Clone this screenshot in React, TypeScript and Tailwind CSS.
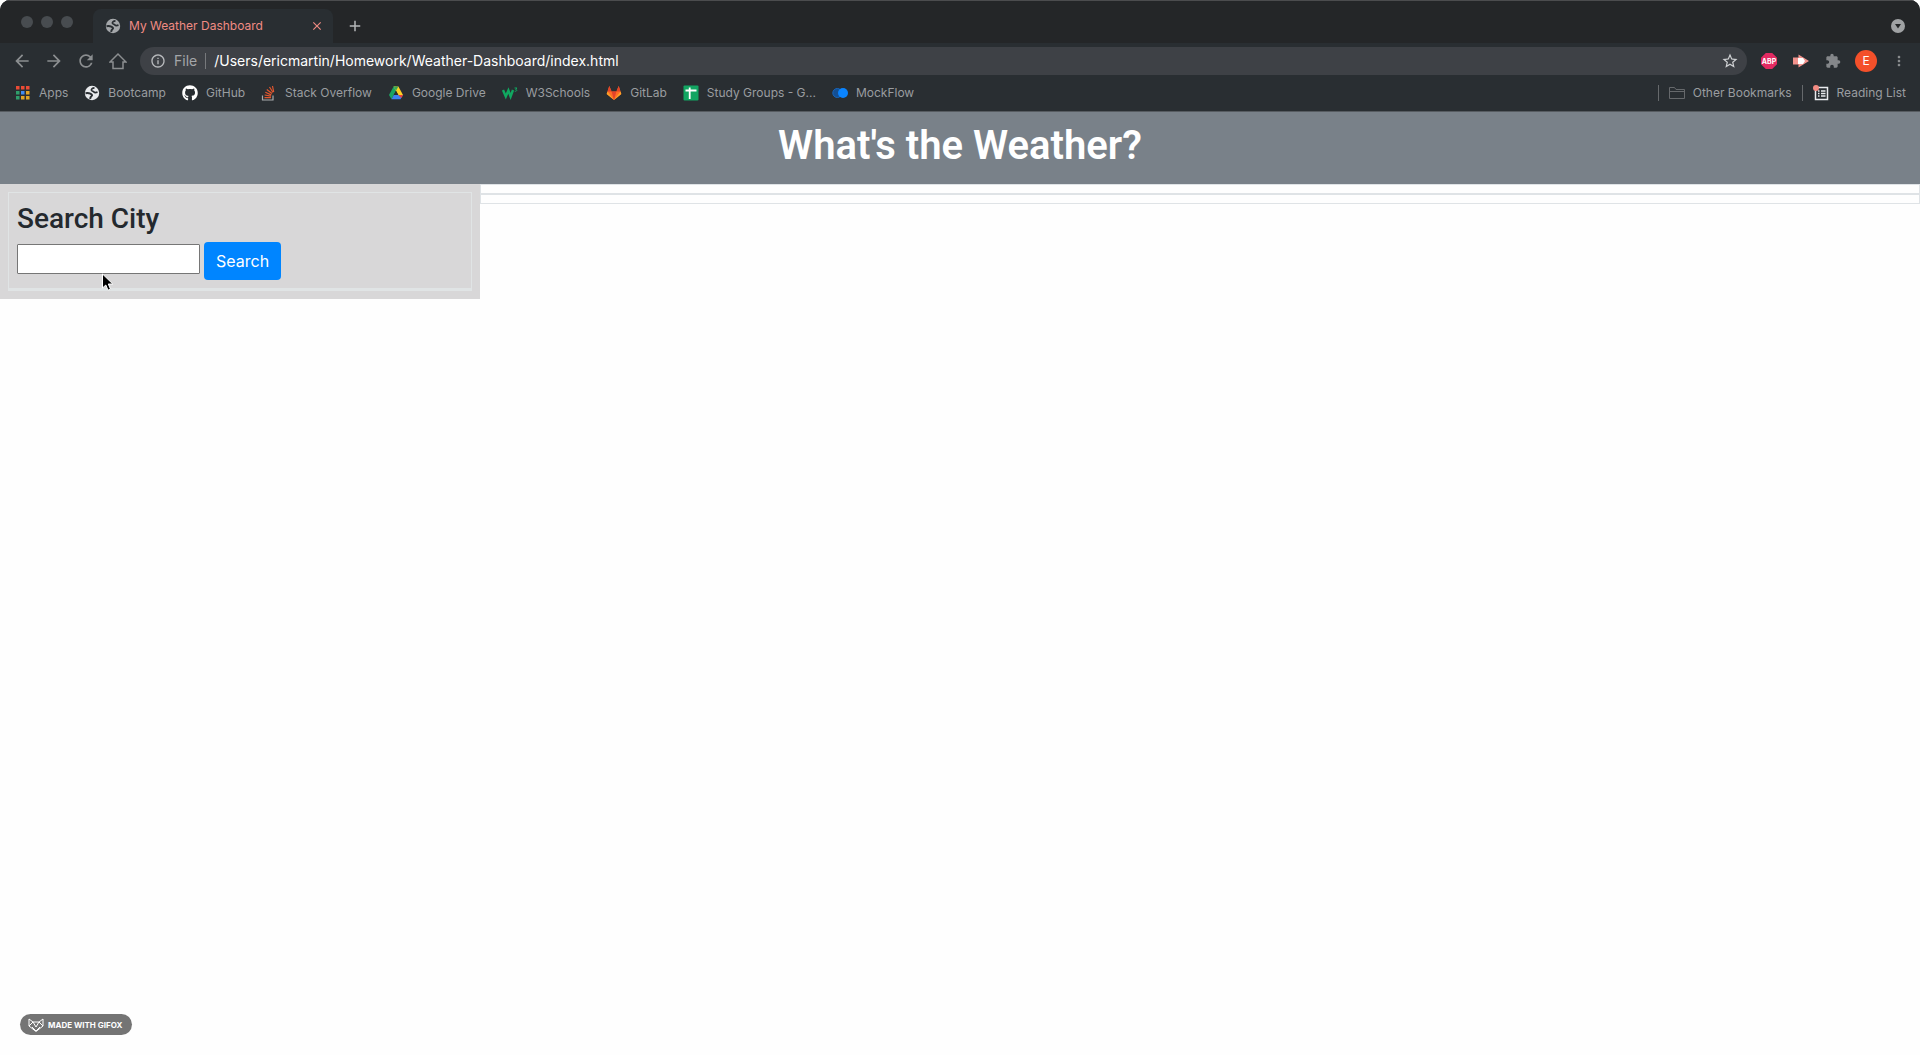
import React from "react";
import { FaGithub } from "react-icons/fa";
import {
  MdArrowBack, MdArrowForward, MdRefresh, MdInfoOutline, MdStarBorder, MdExtension, MdMoreVert, MdClose, MdAdd,
} from "react-icons/md";

function Globe() {
  return (
    <svg viewBox="0 0 16 16" className="size-4 shrink-0" aria-hidden="true">
      <circle cx="8" cy="8" r="7.200" fill="currentColor" />
      <path d="M10.500 2.800C8.500 3 7.200 4 7.500 5.300c.3 1 1.900.8 2.500 1.700.5.8 1.700.8 3.500.2" fill="none" stroke="#292e32" strokeWidth="1.800" />
      <path d="M1.500 8.200c1.800-.3 3.500-.2 4.800.4 1.500.7 2.300 1.500 1.300 2.400-1 .7-1.600 1.200-1.300 3" fill="none" stroke="#292e32" strokeWidth="2" />
    </svg>
  );
}

function AppsIcon() {
  const dots = ["#ea4b35", "#ea4b35", "#ea4b35", "#2f9e6b", "#3f8cf0", "#e0a526", "#2f9e6b", "#e0a526", "#e0a526"];
  return (
    <svg viewBox="0 0 16 16" className="size-4 shrink-0" aria-hidden="true">
      {dots.map((c, i) => (
        <rect key={i} x={1 + (i % 3) * 5} y={1 + Math.floor(i / 3) * 5} width="3.500" height="3.500" fill={c} />
      ))}
    </svg>
  );
}

function StackOverflow() {
  return (
    <svg viewBox="0 0 16 16" className="size-4 shrink-0" aria-hidden="true" fill="none">
      <path d="M1.500 10.500v4.500h10.500v-4.500" stroke="#a9abad" strokeWidth="1.200" />
      <path d="M3.500 12.700h6.500M3.600 10l6.500 1.200M4.300 7.200l6 2.700M5.800 4.500l5.200 4M8.500 2l3.500 5.500M11.500 1l1.200 6" stroke="#e4572e" strokeWidth="1.200" />
    </svg>
  );
}

function Drive() {
  return (
    <svg viewBox="0 0 16 16" className="size-4 shrink-0" aria-hidden="true">
      <path d="M5.600 1.500H8V5.700L3.500 14.200 1 10z" fill="#1ba462" />
      <path d="M5.600 1.500h4.800L15 10h-4.700z" fill="#ffd024" />
      <path d="M3.500 14.200 5.800 10H15l-2.500 4.200z" fill="#3f82f0" />
      <path d="M10.300 10H15l-1.600 3z" fill="#e94235" />
      <path d="M5.600 1.500h4.800L8 5.700z" fill="#3aa757" />
      <path d="M8 5.700 10.300 10H5.700z" fill="#292e32" />
    </svg>
  );
}

function W3() {
  return (
    <svg viewBox="0 0 16 16" className="size-4 shrink-0" aria-hidden="true" fill="none" stroke="#10a860">
      <path d="M1 5l2.800 6.500L6.400 5.500l2.200 6L11 5" strokeWidth="2.400" />
      <path d="M12.500 3h2.500l-1.400 1.400c1.700 0 1.700 2-.8 1.900" strokeWidth="1" />
    </svg>
  );
}

function GitLab() {
  return (
    <svg viewBox="0 0 16 16" className="size-4 shrink-0" aria-hidden="true">
      <path d="M3.300 1 5.600 6.500h4.800L12.700 1 15.300 9 8 15 .7 9z" fill="#fc6d26" />
      <path d="M5.600 6.500h4.800L8 15z" fill="#e24329" />
      <path d="M3.300 1 5.600 6.500H1.500zM12.700 1l1.800 5.500h-4.100z" fill="#e24329" />
      <path d="M1.500 6.500.7 9 8 15zM14.500 6.500l.8 2.500L8 15z" fill="#fca326" />
    </svg>
  );
}

function Sheets() {
  return (
    <svg viewBox="0 0 16 16" className="size-4 shrink-0" aria-hidden="true">
      <rect x=".5" y=".5" width="15" height="15" rx="1" fill="#12a562" />
      <path d="M2.500 5.500h11M6.700 2.500v11.500" stroke="#fff" strokeWidth="1.800" />
    </svg>
  );
}

function MockFlow() {
  return (
    <svg viewBox="0 0 16 16" className="size-4 shrink-0" aria-hidden="true">
      <circle cx="5.300" cy="8" r="4.500" fill="#144f93" stroke="#1767bd" />
      <circle cx="11" cy="8" r="5" fill="#0a84ff" />
    </svg>
  );
}

const bookmarks = [
  { label: "Apps", icon: <AppsIcon /> },
  { label: "Bootcamp", icon: <span className="text-[#e8eaed]"><Globe /></span> },
  { label: "GitHub", icon: <FaGithub className="size-4 shrink-0 text-white" /> },
  { label: "Stack Overflow", icon: <StackOverflow /> },
  { label: "Google Drive", icon: <Drive /> },
  { label: "W3Schools", icon: <W3 /> },
  { label: "GitLab", icon: <GitLab /> },
  { label: "Study Groups - G...", icon: <Sheets /> },
  { label: "MockFlow", icon: <MockFlow /> },
];

function TabStrip() {
  return (
    <div className="flex h-[43px] items-end border-t border-[#4b4c4e] bg-[#242628]">
      <div className="flex gap-2 self-center pl-[21px] pr-5">
        <span className="size-3 rounded-full bg-[#484c50]" />
        <span className="size-3 rounded-full bg-[#484c50]" />
        <span className="size-3 rounded-full bg-[#484c50]" />
      </div>
      <div className="flex h-[34px] w-[240px] items-center rounded-t-lg bg-[#292e32] pl-3 pr-2">
        <span className="text-[#a4a7aa]"><Globe /></span>
        <span className="flex-1 pl-2 text-xs text-[#f08b83]">My Weather Dashboard</span>
        <button aria-label="Close tab" className="grid size-4 place-items-center text-[#f08b83]"><MdClose className="size-3.5" /></button>
      </div>
      <button aria-label="New tab" className="ml-3 grid h-[34px] w-5 place-items-center text-[#b4b6b8]"><MdAdd className="size-[18px]" /></button>
      <button aria-label="Search tabs" className="mb-2.5 ml-auto mr-[15px] grid size-3.5 place-items-center rounded-full bg-[#a0a2a4]">
        <svg viewBox="0 0 8 8" className="size-2" aria-hidden="true"><path d="M1 2h6L4 6.500z" fill="#242628" /></svg>
      </button>
    </div>
  );
}

function Toolbar() {
  return (
    <div className="flex h-9 items-center">
      <div className="flex gap-3 pl-3 text-[#8b8e90]">
        <button aria-label="Back" className="grid size-5 place-items-center"><MdArrowBack className="size-5" /></button>
        <button aria-label="Forward" className="grid size-5 place-items-center"><MdArrowForward className="size-5" /></button>
        <button aria-label="Reload" className="grid size-5 place-items-center"><MdRefresh className="size-5" /></button>
        <button aria-label="Home" className="grid size-5 place-items-center">
          <svg viewBox="0 0 18 18" className="size-[18px]" fill="none" stroke="currentColor" strokeWidth="1.500" aria-hidden="true">
            <path d="M1 10 9 2l8 8H14v6.500H4V10z" />
          </svg>
        </button>
      </div>
      <div className="ml-3 flex h-7 flex-1 items-center rounded-full bg-[#3e4146] pl-2.5 pr-2">
        <MdInfoOutline className="size-4 text-[#b8babd]" />
        <span className="ml-2 border-r border-[#77797c] pr-2 text-sm leading-4 text-[#a4a6a9]">File</span>
        <input aria-label="Address" defaultValue="/Users/ericmartin/Homework/Weather-Dashboard/index.html" className="ml-2 flex-1 bg-transparent text-sm text-white outline-none" />
        <button aria-label="Bookmark this page"><MdStarBorder className="size-[18px] text-[#d0d2d4]" /></button>
      </div>
      <div className="flex items-center gap-4 pl-3.5 pr-[13px]">
        <button aria-label="Adblock Plus" className="grid size-4 place-items-center">
          <svg viewBox="0 0 16 16" className="size-4" aria-hidden="true">
            <path d="M4.800 0h6.400L16 4.800v6.400L11.200 16H4.800L0 11.200V4.800z" fill="#e32a62" />
            <text x="8" y="10.500" fontSize="7" fontWeight="700" textAnchor="middle" fill="#fff">ABP</text>
          </svg>
        </button>
        <button aria-label="Screen recorder">
          <svg viewBox="0 0 16 16" className="size-4" aria-hidden="true">
            <path d="M0 4.500h5.500V1.500l10.500 6.500-10.500 6.500v-3H0z" fill="#f2928c" />
            <path d="M5 5h5l2 3-2 3H5z" fill="#fff" />
          </svg>
        </button>
        <button aria-label="Extensions"><MdExtension className="size-4 text-[#84878a]" /></button>
        <div className="flex items-center gap-3.5 -ml-0.5">
          <button aria-label="Profile" className="grid size-[22px] place-items-center rounded-full bg-[#f4502a] text-xs text-white">E</button>
          <button aria-label="Menu"><MdMoreVert className="size-4 text-[#8b8e90]" /></button>
        </div>
      </div>
    </div>
  );
}

function BookmarksBar() {
  return (
    <nav className="flex h-8 items-center pb-1 pl-[15px] pr-3.5 text-xs text-[#9a9da0]">
      <div className="flex gap-4">
        {bookmarks.map((b) => (
          <a key={b.label} href="#" className="flex items-center gap-2 whitespace-nowrap">{b.icon}{b.label}</a>
        ))}
      </div>
      <div className="ml-auto flex items-center gap-2.5 whitespace-nowrap">
        <span className="h-4 w-px bg-[#66696c]" />
        <a href="#" className="flex items-center gap-2">
          <svg viewBox="0 0 16 16" className="size-4" fill="none" stroke="#66696c" aria-hidden="true"><path d="M.5 13.500v-11h5l1.500 2h8.500v9zM.5 6.500h15" /></svg>
          Other Bookmarks
        </a>
        <span className="h-4 w-px bg-[#66696c]" />
        <a href="#" className="flex items-center gap-2">
          <svg viewBox="0 0 16 16" className="size-4" aria-hidden="true">
            <path d="M2.500 2.500h12v12h-12z" fill="none" stroke="#e8eaed" strokeWidth="1.500" />
            <path d="M5 6h1.500M5 8.500h1.500M5 11h1.500M8 6h4.500M8 8.500h4.500M8 11h4.500" stroke="#e8eaed" strokeWidth="1.300" />
            <circle cx="3" cy="3" r="3" fill="#f28b82" />
          </svg>
          Reading List
        </a>
      </div>
    </nav>
  );
}

export default function App() {
  return (
    <div className="flex min-h-screen flex-col bg-[#fefefe] font-[Inter,sans-serif]">
      <div className="overflow-hidden rounded-t-[10px] border-b border-[#575c61] bg-[#292e32]">
        <TabStrip />
        <Toolbar />
        <BookmarksBar />
      </div>
      <header className="bg-[#798189] pb-3.5 pt-2.5 text-center">
        <h1 className="font-[Roboto,sans-serif] text-[40px] font-semibold leading-[48px] text-white">What&apos;s the Weather?</h1>
      </header>
      <main className="flex flex-1 items-start">
        <aside className="w-1/4 bg-[#d8d7d8] p-2">
          <form className="border border-b-[3px] border-[#e0e4e5] p-2" onSubmit={(e) => e.preventDefault()}>
            <label htmlFor="city" className="mb-[5px] block font-[Roboto,sans-serif] text-[28px] font-medium leading-9 text-[#24292e]">Search City</label>
            <div className="flex items-start gap-1">
              <input id="city" type="text" className="mt-0.5 h-[30px] w-[183px] rounded-[1px] border border-[#767676] bg-white px-0.5" />
              <button className="h-[38px] rounded bg-[#0085ff] px-3 text-base text-white">Search</button>
            </div>
          </form>
        </aside>
        <section className="flex-1">
          <div className="h-2.5 border border-[#dfe3e6] bg-[#fefefe]" />
          <div className="h-2.5 border border-[#dfe3e6] bg-[#fefefe]" />
        </section>
      </main>
      <svg viewBox="0 0 14 20" className="pointer-events-none absolute left-[101px] top-[273px] h-5 w-3.5" aria-hidden="true">
        <path d="M1.500 1v14l3.300-3 2.200 5.200 2.500-1-2.200-5.200h4.500z" fill="#000" stroke="#fff" />
      </svg>
      <footer className="px-5 pb-5">
        <div className="flex h-[21px] w-28 items-center gap-1 rounded-full bg-[#747474] pl-2 text-white">
          <svg viewBox="0 0 16 14" className="h-3.5 w-4" fill="none" stroke="currentColor" aria-hidden="true">
            <path d="M1 1l4 3h6l4-3v7l-7 5.500L1 8zM1 8l4-4 3 5 3-5 4 4M4 9l4 4 4-4" />
          </svg>
          <span className="whitespace-nowrap text-[8px] font-bold">MADE WITH GIFOX</span>
        </div>
      </footer>
    </div>
  );
}
